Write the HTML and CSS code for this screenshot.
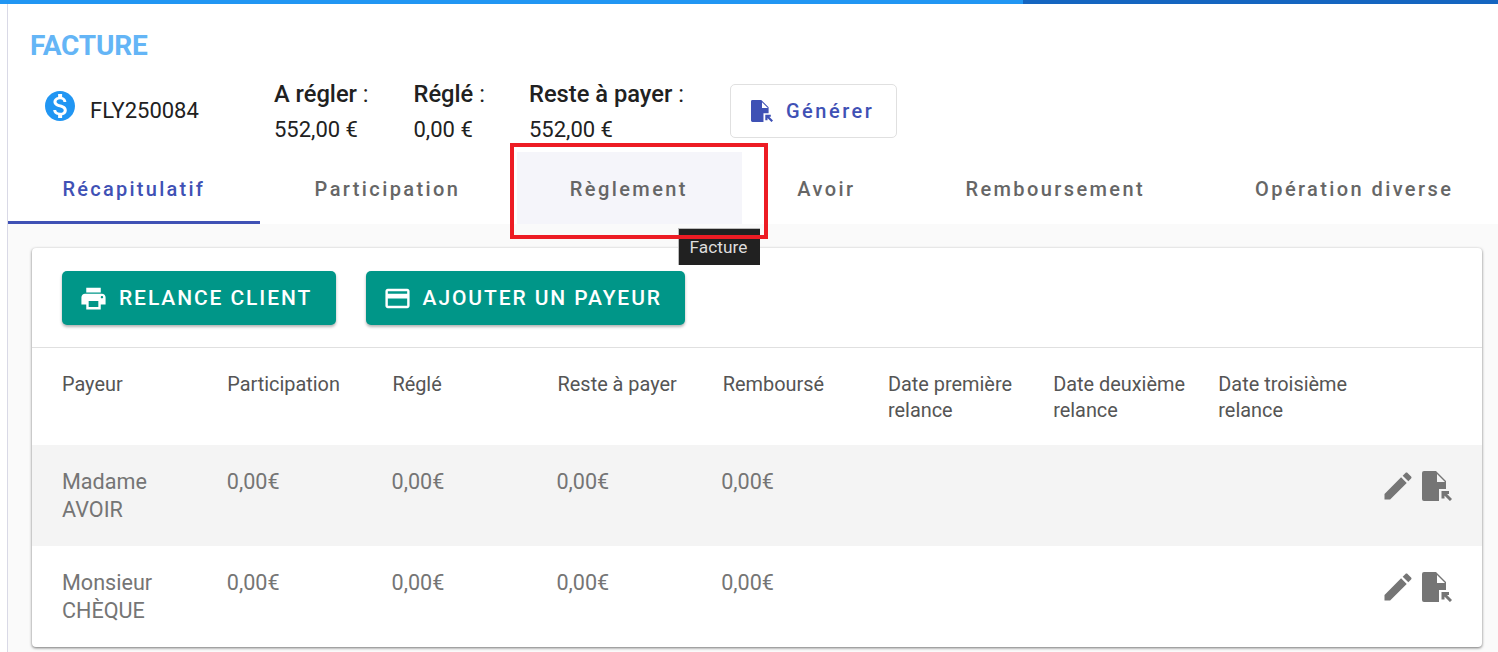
FILE: index.html
```html
<!DOCTYPE html>
<html lang="fr">

<head>
    <meta charset="UTF-8">
    <meta name="viewport" content="width=device-width, initial-scale=1.0">
    <title>Facture</title>
    <link rel="stylesheet" href="styles.css">
</head>

<body>
    <!-- barre de progression -->
    <div class="topbar"><div class="topbar-fill"></div></div>

    <main class="page">
        <h1 class="title">FACTURE</h1>

        <!-- résumé de la facture -->
        <section class="summary">
            <div class="invoice-ref">
                <svg class="icon-money" viewBox="0 0 24 24"><path d="M12 2C6.48 2 2 6.48 2 12s4.48 10 10 10 10-4.48 10-10S17.52 2 12 2zm1.41 16.09V20h-2.67v-1.93c-1.71-.36-3.16-1.46-3.27-3.4h1.96c.1 1.05.82 1.87 2.65 1.87 1.96 0 2.4-.98 2.4-1.59 0-.83-.44-1.61-2.67-2.14-2.48-.6-4.18-1.62-4.18-3.67 0-1.72 1.39-2.84 3.11-3.21V4h2.67v1.95c1.86.45 2.79 1.86 2.85 3.39H14.3c-.05-1.11-.64-1.87-2.22-1.87-1.5 0-2.4.68-2.4 1.64 0 .84.65 1.39 2.67 1.91s4.18 1.39 4.18 3.91c-.01 1.83-1.38 2.83-3.12 3.16z"/></svg>
                <span class="invoice-num">FLY250084</span>
            </div>
            <div class="amount amount-due">
                <div class="amount-label"><b>A régler</b> :</div>
                <div class="amount-value">552,00 €</div>
            </div>
            <div class="amount amount-paid">
                <div class="amount-label"><b>Réglé</b> :</div>
                <div class="amount-value">0,00 €</div>
            </div>
            <div class="amount amount-left">
                <div class="amount-label"><b>Reste à payer</b> :</div>
                <div class="amount-value">552,00 €</div>
            </div>
            <button class="btn-generate">
                <svg class="icon-file" viewBox="0 0 30 30"><path d="M2 0H14L24 10V18H17V30H2a2 2 0 0 1-2-2V2a2 2 0 0 1 2-2z"/><path class="fold" d="M15 3V11H23z"/><path class="arrow" d="M21.5 21.5L29 29M21 27.5V21.5H27"/></svg>
                Générer
            </button>
        </section>

        <!-- onglets -->
        <nav class="tabs">
            <a class="tab active">Récapitulatif</a>
            <a class="tab">Participation</a>
            <a class="tab hover">Règlement</a>
            <a class="tab">Avoir</a>
            <a class="tab">Remboursement</a>
            <a class="tab">Opération diverse</a>
        </nav>

        <div class="content">
            <div class="card">
                <div class="actions">
                    <button class="btn">
                        <svg class="icon-btn" viewBox="0 0 24 24"><path d="M19 8H5c-1.66 0-3 1.34-3 3v6h4v4h12v-4h4v-6c0-1.66-1.34-3-3-3zm-3 11H8v-5h8v5zm3-7c-.55 0-1-.45-1-1s.45-1 1-1 1 .45 1 1-.45 1-1 1zm-1-9H6v4h12V3z"/></svg>
                        RELANCE CLIENT
                    </button>
                    <button class="btn">
                        <svg class="icon-btn" viewBox="0 0 24 24"><path d="M20 4H4c-1.11 0-1.99.89-1.99 2L2 18c0 1.11.89 2 2 2h16c1.11 0 2-.89 2-2V6c0-1.11-.89-2-2-2zm0 14H4v-6h16v6zm0-10H4V6h16v2z"/></svg>
                        AJOUTER UN PAYEUR
                    </button>
                </div>

                <!-- tableau des payeurs -->
                <div class="row row-head">
                    <div>Payeur</div>
                    <div>Participation</div>
                    <div>Réglé</div>
                    <div>Reste à payer</div>
                    <div>Remboursé</div>
                    <div>Date première relance</div>
                    <div>Date deuxième relance</div>
                    <div>Date troisième relance</div>
                </div>

                <div class="row row-body row-odd">
                    <div>Madame AVOIR</div>
                    <div>0,00€</div>
                    <div>0,00€</div>
                    <div>0,00€</div>
                    <div>0,00€</div>
                    <div></div>
                    <div></div>
                    <div></div>
                    <div class="row-icons">
                        <svg class="icon-edit" viewBox="0 0 24 24"><path d="M3 17.25V21h3.75L17.81 9.94l-3.75-3.75L3 17.25zM20.71 7.04c.39-.39.39-1.02 0-1.41l-2.34-2.34c-.39-.39-1.02-.39-1.41 0l-1.83 1.83 3.75 3.75 1.83-1.83z"/></svg>
                        <svg class="icon-doc" viewBox="0 0 30 30"><path d="M2 0H14L24 10V18H17V30H2a2 2 0 0 1-2-2V2a2 2 0 0 1 2-2z"/><path class="fold" d="M15 3V11H23z"/><path class="arrow" d="M21.5 21.5L29 29M21 27.5V21.5H27"/></svg>
                    </div>
                </div>

                <div class="row row-body">
                    <div>Monsieur CHÈQUE</div>
                    <div>0,00€</div>
                    <div>0,00€</div>
                    <div>0,00€</div>
                    <div>0,00€</div>
                    <div></div>
                    <div></div>
                    <div></div>
                    <div class="row-icons">
                        <svg class="icon-edit" viewBox="0 0 24 24"><path d="M3 17.25V21h3.75L17.81 9.94l-3.75-3.75L3 17.25zM20.71 7.04c.39-.39.39-1.02 0-1.41l-2.34-2.34c-.39-.39-1.02-.39-1.41 0l-1.83 1.83 3.75 3.75 1.83-1.83z"/></svg>
                        <svg class="icon-doc" viewBox="0 0 30 30"><path d="M2 0H14L24 10V18H17V30H2a2 2 0 0 1-2-2V2a2 2 0 0 1 2-2z"/><path class="fold" d="M15 3V11H23z"/><path class="arrow" d="M21.5 21.5L29 29M21 27.5V21.5H27"/></svg>
                    </div>
                </div>
            </div>
        </div>
    </main>

    <!-- infobulle et cadre rouge posés sur la page -->
    <div class="tooltip">Facture</div>
    <div class="highlight"></div>
</body>

</html>
```

FILE: styles.css
```css
html,
body {
    height: 100%;
    overflow: hidden;
}

body {
    margin: 0;
    background-color: #fff;
    font-family: Roboto, "Liberation Sans", sans-serif;
    color: #212121;
}

/* barre du haut */
.topbar {
    height: 4px;
    background-color: #1565c0;
}

.topbar-fill {
    width: 1023px;
    height: 4px;
    background-color: #2196f3;
}

.page {
    margin-left: 7px;
    border-left: 1px solid #d9d9e6;
    height: 648px;
    display: flex;
    flex-direction: column;
}

.title {
    margin: 0;
    padding: 26px 0 0 22px;
    height: 36px;
    font-size: 28px;
    line-height: 32px;
    font-weight: 700;
    letter-spacing: -0.2px;
    color: #64b5f6;
}

/* résumé */
.summary {
    display: flex;
    align-items: flex-start;
    height: 86px;
    box-sizing: border-box;
    padding-top: 15px;
}

.invoice-ref {
    display: flex;
    align-items: center;
    width: 266px;
    padding: 7px 0 0 34px;
    box-sizing: border-box;
}

.invoice-num {
    font-size: 22px;
    padding-top: 8px;
}

.icon-money {
    width: 36px;
    height: 36px;
    fill: #2196f3;
    margin-right: 12px;
}

.amount-label {
    font-size: 23.7px;
    line-height: 26px;
    margin-bottom: 10px;
}

.amount-label b {
    font-weight: 500;
}

.amount-value {
    font-size: 22px;
    line-height: 26px;
}

.amount-due {
    width: 139.5px;
}

.amount-paid {
    width: 115.5px;
}

.amount-left {
    width: 201px;
}

.btn-generate {
    display: flex;
    align-items: center;
    gap: 13px;
    width: 167px;
    height: 54px;
    padding: 0 0 0 20px;
    border: 1px solid #e0e0e0;
    border-radius: 5px;
    background-color: #fff;
    font-family: inherit;
    font-size: 20px;
    font-weight: 500;
    letter-spacing: 2.5px;
    color: #3f51b5;
    margin-top: 3px;
}

.icon-file {
    width: 22px;
    height: 22px;
    fill: #3f51b5;
    flex-shrink: 0;
}

.icon-file .arrow,
.icon-doc .arrow {
    fill: none;
    stroke-width: 3;
}

.icon-file .arrow {
    stroke: #3f51b5;
}

.icon-doc .arrow {
    stroke: #757575;
}

.fold {
    fill: #fff;
}

.row-odd .fold {
    fill: #f4f4f4;
}

/* onglets */
.tabs {
    display: flex;
    height: 72px;
    flex-shrink: 0;
}

.tab {
    display: flex;
    align-items: center;
    justify-content: center;
    padding: 5px 55px 0;
    box-sizing: border-box;
    height: 72px;
    border-bottom: 3px solid transparent;
    font-size: 20px;
    font-weight: 500;
    letter-spacing: 2.4px;
    color: #666;
    white-space: nowrap;
}

.tab.active {
    padding: 5px 54.5px 0;
    letter-spacing: 2.25px;
    color: #3f51b5;
    border-bottom-color: #3f51b5;
}

.tab.hover {
    background-color: #f5f5fa;
    border-bottom: none;
    margin-left: 2px;
    padding: 5px 54.5px 3px 52.5px;
}

/* contenu */
.content {
    flex: 1;
    background-color: #fafafa;
    padding: 24px 16px 0 24px;
}

.card {
    background-color: #fff;
    border-radius: 4px;
    box-shadow: 0 1px 3px rgba(0, 0, 0, 0.55);
}

.actions {
    display: flex;
    gap: 30px;
    height: 100px;
    padding: 23px 0 0 30px;
    box-sizing: border-box;
    border-bottom: 1px solid #e0e0e0;
}

.btn {
    display: flex;
    align-items: center;
    gap: 11px;
    height: 54px;
    padding: 0 23.5px 0 17px;
    border: none;
    border-radius: 5px;
    background-color: #009688;
    box-shadow: 0 2px 3px rgba(0, 0, 0, 0.3);
    font-family: inherit;
    font-size: 21px;
    font-weight: 500;
    letter-spacing: 1.9px;
    color: #fff;
}

.icon-btn {
    width: 29px;
    height: 29px;
    fill: #fff;
}

/* lignes du tableau */
.row {
    display: grid;
    grid-template-columns: repeat(8, 165.2px) 1fr;
    padding: 0 30px;
    font-size: 19.9px;
    line-height: 26px;
}

.row-head {
    height: 97px;
    box-sizing: border-box;
    padding-top: 24px;
    color: #555;
}

.row-head > div {
    padding-right: 20px;
}

.row-body {
    height: 101px;
    box-sizing: border-box;
    padding-top: 23px;
    font-size: 21.6px;
    line-height: 28px;
    color: #757575;
    grid-template-columns: repeat(8, 164.8px) 1fr;
}

.row-body > div {
    padding-right: 50px;
}

.row-body > .row-icons {
    display: flex;
    justify-content: flex-end;
    align-items: flex-start;
    padding-right: 0;
    margin-left: -80px;
}

.row-odd {
    background-color: #f4f4f4;
}

.icon-edit {
    width: 36px;
    height: 36px;
    fill: #757575;
    margin-top: 0;
}

.icon-doc {
    width: 30px;
    height: 30px;
    fill: #757575;
    margin: 3px 0 0 6px;
}

/* éléments superposés */
.tooltip {
    position: absolute;
    left: 678px;
    top: 228px;
    width: 82px;
    height: 37px;
    box-sizing: border-box;
    padding: 8px 2px 0 0;
    background-color: #212121;
    border-top: 1px solid #bbb;
    border-left: 1px solid #bbb;
    font-size: 17.3px;
    line-height: 20px;
    text-align: center;
    color: #ddd;
}

.highlight {
    position: absolute;
    left: 510px;
    top: 143px;
    width: 258px;
    height: 96px;
    box-sizing: border-box;
    border: 4px solid #ed1c24;
}
```
